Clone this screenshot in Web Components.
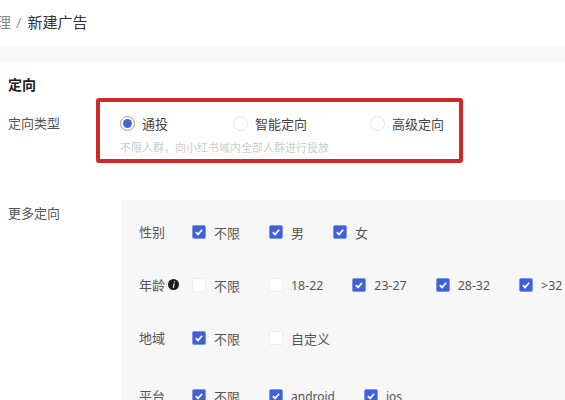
<!DOCTYPE html>
<html lang="zh-CN">
<head>
<meta charset="utf-8">
<title>新建广告</title>
<style>
  html, body { margin: 0; height: 400px; overflow: hidden; background: #fff; }
  body { font-family: "Noto Sans", "Noto Sans CJK SC", sans-serif; color: #444; }
</style>
</head>
<body>
<ad-page>
  <ad-breadcrumb slot="top" parent="理" current="新建广告"></ad-breadcrumb>

  <ad-section heading="定向">
    <ad-field label="定向类型" style="--label-top:15px;--label-w:88px">
      <ad-type-box hint="不限人群，向小红书域内全部人群进行投放">
        <ad-radio checked>通投</ad-radio>
        <ad-radio style="--w:137px">智能定向</ad-radio>
        <ad-radio>高级定向</ad-radio>
      </ad-type-box>
    </ad-field>

    <ad-field label="更多定向" style="--label-top:3px;--label-w:113px;margin-top:37px">
      <ad-panel>
        <ad-row label="性别" style="height:54px">
          <ad-check checked>不限</ad-check><ad-check checked>男</ad-check><ad-check checked>女</ad-check>
        </ad-row>
        <ad-row label="年龄" info style="height:52px">
          <ad-check>不限</ad-check><ad-check style="font-size:12.4px">18-22</ad-check><ad-check style="font-size:12.4px" checked>23-27</ad-check><ad-check style="font-size:12.4px" checked>28-32</ad-check><ad-check style="font-size:12.4px" checked>&gt;32</ad-check>
        </ad-row>
        <ad-row label="地域" style="height:54px">
          <ad-check checked>不限</ad-check><ad-check>自定义</ad-check>
        </ad-row>
        <ad-row label="平台" style="height:62px">
          <ad-check checked>不限</ad-check><ad-check style="font-size:12px" checked>android</ad-check><ad-check style="font-size:12px" checked>ios</ad-check>
        </ad-row>
      </ad-panel>
    </ad-field>
  </ad-section>
</ad-page>

<script>
class AdPage extends HTMLElement {
  constructor() {
    super();
    this.attachShadow({mode: 'open'}).innerHTML = `
      <style>
        :host { display: block; width: 565px; height: 400px; overflow: hidden; }
        .band { height: 15px; background: #f8f8f8; }
      </style>
      <slot name="top"></slot>
      <div class="band"></div>
      <slot></slot>`;
  }
}

class AdBreadcrumb extends HTMLElement {
  connectedCallback() {
    if (this.shadowRoot) return;
    this.attachShadow({mode: 'open'}).innerHTML = `
      <style>
        :host { display: flex; align-items: center; height: 47px; padding-bottom: 4px; box-sizing: border-box; font-size: 15px; color: #333; white-space: nowrap; }
        .parent { color: #888; margin-left: -4px; }
        .sep { color: #999; margin: 0 6px 0 5px; }
      </style>
      <span class="parent">${this.getAttribute('parent')}</span>
      <span class="sep">/</span>
      <span>${this.getAttribute('current')}</span>`;
  }
}

class AdSection extends HTMLElement {
  connectedCallback() {
    if (this.shadowRoot) return;
    this.attachShadow({mode: 'open'}).innerHTML = `
      <style>
        :host { display: block; padding: 13px 0 0 8px; }
        h2 { margin: 0 0 3px; font-size: 14px; line-height: 20px; font-weight: 700; color: #222; }
      </style>
      <h2>${this.getAttribute('heading')}</h2>
      <slot></slot>`;
  }
}

class AdField extends HTMLElement {
  connectedCallback() {
    if (this.shadowRoot) return;
    this.attachShadow({mode: 'open'}).innerHTML = `
      <style>
        :host { display: flex; align-items: flex-start; font-size: 13px; }
        .label { flex: none; width: var(--label-w, 88px); line-height: 20px; padding-top: var(--label-top, 0); color: #555; }
      </style>
      <div class="label">${this.getAttribute('label')}</div>
      <slot></slot>`;
  }
}

class AdTypeBox extends HTMLElement {
  connectedCallback() {
    if (this.shadowRoot) return;
    this.attachShadow({mode: 'open'}).innerHTML = `
      <style>
        :host { display: block; box-sizing: border-box; width: 367px; height: 65px; border: 4px solid #cf2a27; border-radius: 3px; padding: 11px 0 0 20px; }
        .opts { display: flex; height: 20px; align-items: center; }
        .hint { margin-top: 6px; font-size: 11px; line-height: 18px; color: #ccc; white-space: nowrap; }
      </style>
      <div class="opts"><slot></slot></div>
      <div class="hint">${this.getAttribute('hint')}</div>`;
  }
}

class AdRadio extends HTMLElement {
  constructor() {
    super();
    this.attachShadow({mode: 'open'}).innerHTML = `
      <style>
        :host { display: flex; align-items: center; width: var(--w, 113px); flex: none; gap: 7px; font-size: 13px; color: #444; white-space: nowrap; }
        .dot { box-sizing: border-box; width: 15px; height: 15px; border-radius: 50%; border: 1px solid #e6e6e6; background: #fff; flex: none; display: flex; align-items: center; justify-content: center; }
        .dot i { display: none; width: 9px; height: 9px; border-radius: 50%; background: #4565d8; }
        :host([checked]) .dot { border-color: #9a9a9a; }
        :host([checked]) .dot i { display: block; }
      </style>
      <span class="dot"><i></i></span><slot></slot>`;
  }
}

class AdPanel extends HTMLElement {
  constructor() {
    super();
    this.attachShadow({mode: 'open'}).innerHTML = `
      <style>
        :host { display: block; width: 444px; height: 220px; padding: 5px 0 0 18px; box-sizing: border-box; background: #f7f7f7; border-radius: 3px 0 0 0; }
      </style>
      <slot></slot>`;
  }
}

class AdRow extends HTMLElement {
  connectedCallback() {
    if (this.shadowRoot) return;
    const info = this.hasAttribute('info') ? `
      <svg width="11" height="11" viewBox="0 0 11 11" aria-hidden="true">
        <circle cx="5.5" cy="5.5" r="5.5" fill="#1c1c1c"/>
        <path d="M6 2.2h1.1l-.2 1.2H5.8zM5.5 4.4h1.2L6 8.8H4.8z" fill="#fff"/>
      </svg>` : '';
    this.attachShadow({mode: 'open'}).innerHTML = `
      <style>
        :host { display: flex; align-items: center; font-size: 13px; }
        .name { flex: none; width: 53px; display: flex; align-items: center; gap: 3px; color: #555; position: relative; top: -1px; }
        .opts { display: flex; gap: 29px; white-space: nowrap; position: relative; top: 1px; }
      </style>
      <div class="name">${this.getAttribute('label')}${info}</div>
      <div class="opts"><slot></slot></div>`;
  }
}

class AdCheck extends HTMLElement {
  constructor() {
    super();
    this.attachShadow({mode: 'open'}).innerHTML = `
      <style>
        :host { display: flex; align-items: center; gap: 8px; font-size: 13px; line-height: 20px; color: #555; }
        .box { box-sizing: border-box; width: 14px; height: 14px; border-radius: 2px; background: #fff; border: 1px solid #eee; flex: none; display: flex; position: relative; top: -1px; }
        svg { display: none; width: 12px; height: 12px; }
        :host([checked]) .box { background: #3f60d8; border-color: #7f96e4; }
        :host([checked]) svg { display: block; }
      </style>
      <span class="box">
        <svg viewBox="0 0 12 12"><path d="M2.8 6.2l2.3 2.2 4-4.6" fill="none" stroke="#fff" stroke-width="1.7"/></svg>
      </span>
      <span><slot></slot></span>`;
  }
}

customElements.define('ad-page', AdPage);
customElements.define('ad-breadcrumb', AdBreadcrumb);
customElements.define('ad-section', AdSection);
customElements.define('ad-field', AdField);
customElements.define('ad-type-box', AdTypeBox);
customElements.define('ad-radio', AdRadio);
customElements.define('ad-panel', AdPanel);
customElements.define('ad-row', AdRow);
customElements.define('ad-check', AdCheck);
</script>
</body>
</html>
